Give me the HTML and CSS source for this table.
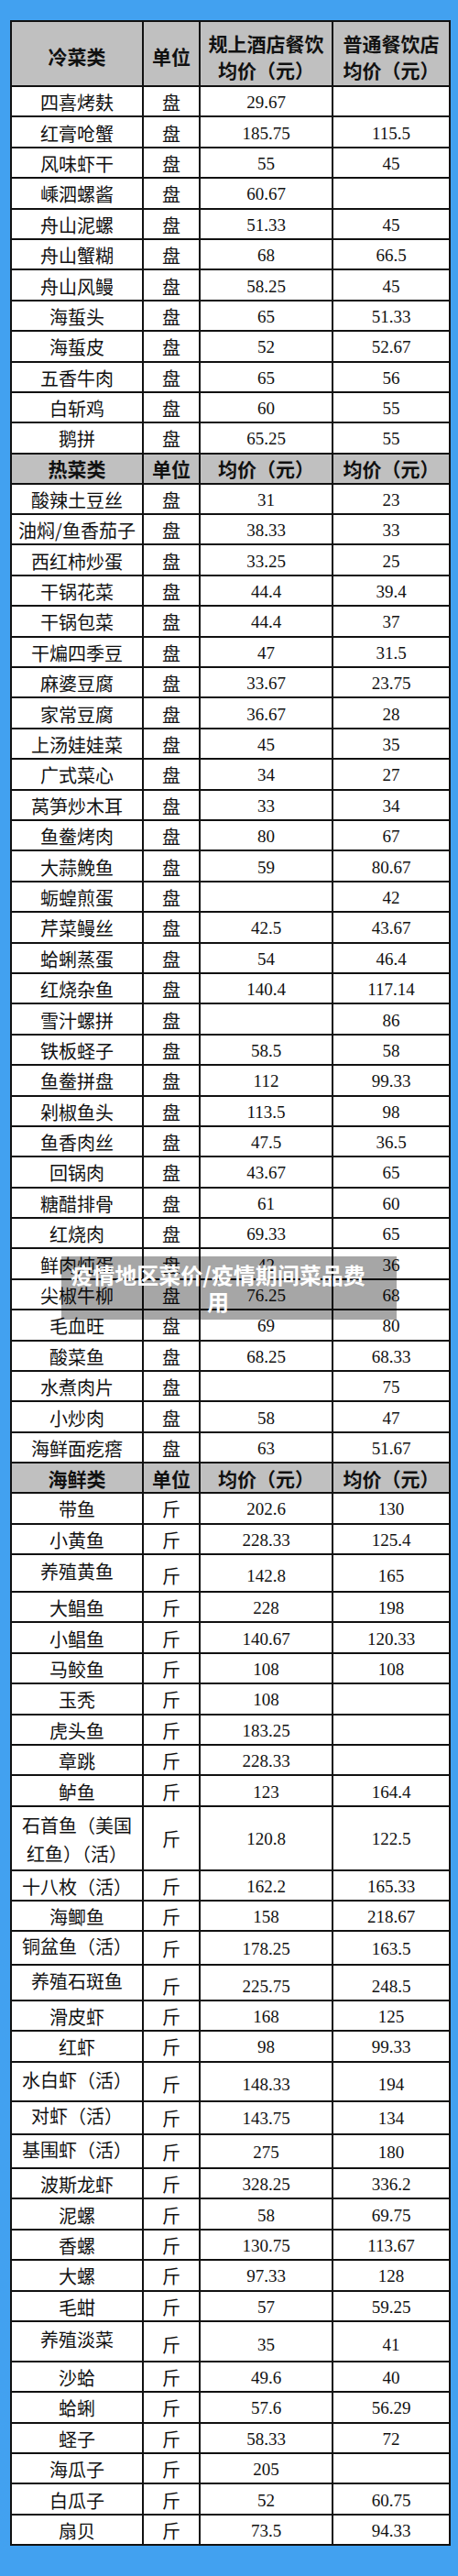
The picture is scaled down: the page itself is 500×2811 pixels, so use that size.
FILE: index.html
```html
<!DOCTYPE html>
<html lang="zh-CN">
<head>
<meta charset="utf-8">
<title>疫情地区菜价</title>
<link rel="stylesheet" href="styles.css">
</head>
<body>
<div class="sheet">
<table class="prices">
<colgroup><col class="c1"><col class="c2"><col class="c3"><col class="c4"></colgroup>
<tbody>
<tr class="head-main"><th>冷菜类</th><th>单位</th><th>规上酒店餐饮<br>均价（元）</th><th>普通餐饮店<br>均价（元）</th></tr>
<tr class="r"><td class="n">四喜烤麸</td><td class="u">盘</td><td class="p">29.67</td><td class="p"></td></tr>
<tr class="r"><td class="n">红膏呛蟹</td><td class="u">盘</td><td class="p">185.75</td><td class="p">115.5</td></tr>
<tr class="r"><td class="n">风味虾干</td><td class="u">盘</td><td class="p">55</td><td class="p">45</td></tr>
<tr class="r"><td class="n">嵊泗螺酱</td><td class="u">盘</td><td class="p">60.67</td><td class="p"></td></tr>
<tr class="r"><td class="n">舟山泥螺</td><td class="u">盘</td><td class="p">51.33</td><td class="p">45</td></tr>
<tr class="r"><td class="n">舟山蟹糊</td><td class="u">盘</td><td class="p">68</td><td class="p">66.5</td></tr>
<tr class="r"><td class="n">舟山风鳗</td><td class="u">盘</td><td class="p">58.25</td><td class="p">45</td></tr>
<tr class="r"><td class="n">海蜇头</td><td class="u">盘</td><td class="p">65</td><td class="p">51.33</td></tr>
<tr class="r"><td class="n">海蜇皮</td><td class="u">盘</td><td class="p">52</td><td class="p">52.67</td></tr>
<tr class="r"><td class="n">五香牛肉</td><td class="u">盘</td><td class="p">65</td><td class="p">56</td></tr>
<tr class="r"><td class="n">白斩鸡</td><td class="u">盘</td><td class="p">60</td><td class="p">55</td></tr>
<tr class="r"><td class="n">鹅拼</td><td class="u">盘</td><td class="p">65.25</td><td class="p">55</td></tr>
<tr class="head-sec"><th>热菜类</th><th>单位</th><th>均价（元）</th><th>均价（元）</th></tr>
<tr class="r"><td class="n">酸辣土豆丝</td><td class="u">盘</td><td class="p">31</td><td class="p">23</td></tr>
<tr class="r"><td class="n">油焖/鱼香茄子</td><td class="u">盘</td><td class="p">38.33</td><td class="p">33</td></tr>
<tr class="r"><td class="n">西红柿炒蛋</td><td class="u">盘</td><td class="p">33.25</td><td class="p">25</td></tr>
<tr class="r"><td class="n">干锅花菜</td><td class="u">盘</td><td class="p">44.4</td><td class="p">39.4</td></tr>
<tr class="r"><td class="n">干锅包菜</td><td class="u">盘</td><td class="p">44.4</td><td class="p">37</td></tr>
<tr class="r"><td class="n">干煸四季豆</td><td class="u">盘</td><td class="p">47</td><td class="p">31.5</td></tr>
<tr class="r"><td class="n">麻婆豆腐</td><td class="u">盘</td><td class="p">33.67</td><td class="p">23.75</td></tr>
<tr class="r"><td class="n">家常豆腐</td><td class="u">盘</td><td class="p">36.67</td><td class="p">28</td></tr>
<tr class="r"><td class="n">上汤娃娃菜</td><td class="u">盘</td><td class="p">45</td><td class="p">35</td></tr>
<tr class="r"><td class="n">广式菜心</td><td class="u">盘</td><td class="p">34</td><td class="p">27</td></tr>
<tr class="r"><td class="n">莴笋炒木耳</td><td class="u">盘</td><td class="p">33</td><td class="p">34</td></tr>
<tr class="r"><td class="n">鱼鲞烤肉</td><td class="u">盘</td><td class="p">80</td><td class="p">67</td></tr>
<tr class="r"><td class="n">大蒜鮸鱼</td><td class="u">盘</td><td class="p">59</td><td class="p">80.67</td></tr>
<tr class="r"><td class="n">蛎蝗煎蛋</td><td class="u">盘</td><td class="p"></td><td class="p">42</td></tr>
<tr class="r"><td class="n">芹菜鳗丝</td><td class="u">盘</td><td class="p">42.5</td><td class="p">43.67</td></tr>
<tr class="r"><td class="n">蛤蜊蒸蛋</td><td class="u">盘</td><td class="p">54</td><td class="p">46.4</td></tr>
<tr class="r"><td class="n">红烧杂鱼</td><td class="u">盘</td><td class="p">140.4</td><td class="p">117.14</td></tr>
<tr class="r"><td class="n">雪汁螺拼</td><td class="u">盘</td><td class="p"></td><td class="p">86</td></tr>
<tr class="r"><td class="n">铁板蛏子</td><td class="u">盘</td><td class="p">58.5</td><td class="p">58</td></tr>
<tr class="r"><td class="n">鱼鲞拼盘</td><td class="u">盘</td><td class="p">112</td><td class="p">99.33</td></tr>
<tr class="r"><td class="n">剁椒鱼头</td><td class="u">盘</td><td class="p">113.5</td><td class="p">98</td></tr>
<tr class="r"><td class="n">鱼香肉丝</td><td class="u">盘</td><td class="p">47.5</td><td class="p">36.5</td></tr>
<tr class="r"><td class="n">回锅肉</td><td class="u">盘</td><td class="p">43.67</td><td class="p">65</td></tr>
<tr class="r"><td class="n">糖醋排骨</td><td class="u">盘</td><td class="p">61</td><td class="p">60</td></tr>
<tr class="r"><td class="n">红烧肉</td><td class="u">盘</td><td class="p">69.33</td><td class="p">65</td></tr>
<tr class="r"><td class="n">鲜肉炖蛋</td><td class="u">盘</td><td class="p">42</td><td class="p">36</td></tr>
<tr class="r"><td class="n">尖椒牛柳</td><td class="u">盘</td><td class="p">76.25</td><td class="p">68</td></tr>
<tr class="r"><td class="n">毛血旺</td><td class="u">盘</td><td class="p">69</td><td class="p">80</td></tr>
<tr class="r"><td class="n">酸菜鱼</td><td class="u">盘</td><td class="p">68.25</td><td class="p">68.33</td></tr>
<tr class="r"><td class="n">水煮肉片</td><td class="u">盘</td><td class="p"></td><td class="p">75</td></tr>
<tr class="r"><td class="n">小炒肉</td><td class="u">盘</td><td class="p">58</td><td class="p">47</td></tr>
<tr class="r"><td class="n">海鲜面疙瘩</td><td class="u">盘</td><td class="p">63</td><td class="p">51.67</td></tr>
<tr class="head-sec"><th>海鲜类</th><th>单位</th><th>均价（元）</th><th>均价（元）</th></tr>
<tr class="r"><td class="n">带鱼</td><td class="u">斤</td><td class="p">202.6</td><td class="p">130</td></tr>
<tr class="r"><td class="n">小黄鱼</td><td class="u">斤</td><td class="p">228.33</td><td class="p">125.4</td></tr>
<tr class="r h41"><td class="n">养殖黄鱼</td><td class="u">斤</td><td class="p">142.8</td><td class="p">165</td></tr>
<tr class="r"><td class="n">大鲳鱼</td><td class="u">斤</td><td class="p">228</td><td class="p">198</td></tr>
<tr class="r"><td class="n">小鲳鱼</td><td class="u">斤</td><td class="p">140.67</td><td class="p">120.33</td></tr>
<tr class="r"><td class="n">马鲛鱼</td><td class="u">斤</td><td class="p">108</td><td class="p">108</td></tr>
<tr class="r"><td class="n">玉秃</td><td class="u">斤</td><td class="p">108</td><td class="p"></td></tr>
<tr class="r"><td class="n">虎头鱼</td><td class="u">斤</td><td class="p">183.25</td><td class="p"></td></tr>
<tr class="r"><td class="n">章跳</td><td class="u">斤</td><td class="p">228.33</td><td class="p"></td></tr>
<tr class="r"><td class="n">鲈鱼</td><td class="u">斤</td><td class="p">123</td><td class="p">164.4</td></tr>
<tr class="r h70"><td class="n wrap">石首鱼（美国红鱼）（活）</td><td class="u">斤</td><td class="p">120.8</td><td class="p">122.5</td></tr>
<tr class="r"><td class="n">十八枚（活）</td><td class="u">斤</td><td class="p">162.2</td><td class="p">165.33</td></tr>
<tr class="r"><td class="n">海鲫鱼</td><td class="u">斤</td><td class="p">158</td><td class="p">218.67</td></tr>
<tr class="r h37"><td class="n">铜盆鱼（活）</td><td class="u">斤</td><td class="p">178.25</td><td class="p">163.5</td></tr>
<tr class="r h38"><td class="n">养殖石斑鱼</td><td class="u">斤</td><td class="p">225.75</td><td class="p">248.5</td></tr>
<tr class="r"><td class="n">滑皮虾</td><td class="u">斤</td><td class="p">168</td><td class="p">125</td></tr>
<tr class="r"><td class="n">红虾</td><td class="u">斤</td><td class="p">98</td><td class="p">99.33</td></tr>
<tr class="r h43"><td class="n">水白虾（活）</td><td class="u">斤</td><td class="p">148.33</td><td class="p">194</td></tr>
<tr class="r h36"><td class="n">对虾（活）</td><td class="u">斤</td><td class="p">143.75</td><td class="p">134</td></tr>
<tr class="r h37"><td class="n">基围虾（活）</td><td class="u">斤</td><td class="p">275</td><td class="p">180</td></tr>
<tr class="r"><td class="n">波斯龙虾</td><td class="u">斤</td><td class="p">328.25</td><td class="p">336.2</td></tr>
<tr class="r"><td class="n">泥螺</td><td class="u">斤</td><td class="p">58</td><td class="p">69.75</td></tr>
<tr class="r"><td class="n">香螺</td><td class="u">斤</td><td class="p">130.75</td><td class="p">113.67</td></tr>
<tr class="r"><td class="n">大螺</td><td class="u">斤</td><td class="p">97.33</td><td class="p">128</td></tr>
<tr class="r"><td class="n">毛蚶</td><td class="u">斤</td><td class="p">57</td><td class="p">59.25</td></tr>
<tr class="r h44"><td class="n">养殖淡菜</td><td class="u">斤</td><td class="p">35</td><td class="p">41</td></tr>
<tr class="r"><td class="n">沙蛤</td><td class="u">斤</td><td class="p">49.6</td><td class="p">40</td></tr>
<tr class="r"><td class="n">蛤蜊</td><td class="u">斤</td><td class="p">57.6</td><td class="p">56.29</td></tr>
<tr class="r"><td class="n">蛏子</td><td class="u">斤</td><td class="p">58.33</td><td class="p">72</td></tr>
<tr class="r"><td class="n">海瓜子</td><td class="u">斤</td><td class="p">205</td><td class="p"></td></tr>
<tr class="r"><td class="n">白瓜子</td><td class="u">斤</td><td class="p">52</td><td class="p">60.75</td></tr>
<tr class="r"><td class="n">扇贝</td><td class="u">斤</td><td class="p">73.5</td><td class="p">94.33</td></tr>
</tbody>
</table>
<div class="caption">疫情地区菜价/疫情期间菜品费用</div>
</div>
</body>
</html>
```

FILE: styles.css
```css
html {
  background: #42a1f0;
}

body {
  margin: 0;
  background: #42a1f0;
}

.sheet {
  position: relative;
  width: 479px;
  margin: 22px 0 0 11px;
}

.prices {
  border-collapse: collapse;
  table-layout: fixed;
  width: 479px;
  background: #ffffff;
  color: #111111;
}

.c1 { width: 144px; }
.c2 { width: 62px; }
.c3 { width: 145px; }
.c4 { width: 128px; }

.prices th,
.prices td {
  border: 2px solid #111111;
  padding: 0;
  text-align: center;
  vertical-align: middle;
}

.prices th {
  background: #c0c0c0;
  font-family: "Noto Sans CJK SC", sans-serif;
  font-weight: 700;
  font-size: 21px;
  line-height: 29px;
}

.head-main {
  height: 71px;
}

.head-main th {
  padding-top: 6px;
}

.head-sec {
  height: 33px;
}

.head-sec th {
  padding-top: 1px;
}

.r {
  height: 33.4px;
}

.r td {
  padding-top: 3px;
}

.n {
  font-family: "Noto Sans CJK SC", sans-serif;
  font-size: 20px;
  line-height: 24px;
  white-space: nowrap;
}

.n.wrap {
  white-space: normal;
  line-height: 31px;
  padding-left: 10px;
  padding-right: 10px;
}

.u {
  font-family: "Noto Sans CJK SC", sans-serif;
  font-size: 20px;
  line-height: 24px;
}

.p {
  font-family: "Liberation Serif", "Noto Sans CJK SC", serif;
  font-size: 19px;
  line-height: 24px;
}

.h36 { height: 36px; }
.h37 { height: 37px; }
.h38 { height: 38.3px; }
.h41 { height: 41px; }
.h43 { height: 43.4px; }
.h44 { height: 44px; }
.h70 { height: 70px; }

.h36 td.n, .h37 td.n, .h38 td.n, .h41 td.n, .h43 td.n, .h44 td.n {
  padding-top: 0;
  padding-bottom: 3px;
}

.h38 td.u, .h38 td.p,
.h41 td.u, .h41 td.p,
.h43 td.u, .h43 td.p,
.h44 td.u, .h44 td.p {
  padding-top: 8px;
}

.caption {
  position: absolute;
  left: 56px;
  top: 1349px;
  width: 330px;
  padding: 6px 30px 6px 6px;
  background: rgba(0, 0, 0, 0.35);
  color: #ffffff;
  font-family: "Noto Sans CJK SC", sans-serif;
  font-weight: 700;
  font-size: 24px;
  line-height: 28.5px;
  text-align: center;
}
```
